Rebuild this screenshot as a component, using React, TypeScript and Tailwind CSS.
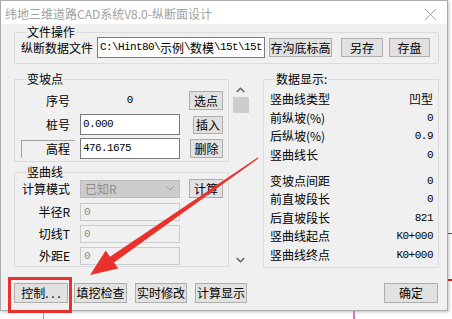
import React from "react";

function Btn(props: { children: React.ReactNode; className?: string }) {
  return (
    <button
      className={
        "flex shrink-0 items-center justify-center border border-[#adadad] bg-[#e1e1e1] text-[12px] leading-none text-black font-['Noto_Sans_CJK_SC',sans-serif] " +
        (props.className ?? "")
      }
    >
      {props.children}
    </button>
  );
}

function Group(props: { title: string; className?: string; children: React.ReactNode }) {
  return (
    <fieldset className={"border border-[#dcdcdc] " + (props.className ?? "")}>
      <legend className="ml-[5px] px-[1px] text-[12px] leading-[10px] text-black">{props.title}</legend>
      {props.children}
    </fieldset>
  );
}

function Row(props: { label: string; value: string }) {
  return (
    <div className="flex h-[18.5px] items-center justify-between text-[12px]">
      <span>{props.label}</span>
      <span className="font-['Liberation_Mono',monospace] text-[11px] tracking-[-0.5px]">{props.value}</span>
    </div>
  );
}

export default function App() {
  return (
    <div className="relative h-[319px] w-[452px] overflow-hidden bg-white font-['Noto_Sans_CJK_SC',sans-serif]">
      {/* background bits of the CAD drawing behind */}
      <div className="absolute left-[448px] top-[233px] h-[1px] w-[4px] bg-[#3050d0]" />
      <div className="absolute left-[448px] top-[279px] h-[2px] w-[4px] bg-[#d02020]" />
      <div className="absolute left-[43px] top-[311px] h-[8px] w-[1px] bg-[#e070c0]" />
      <div className="absolute left-[353px] top-[311px] h-[8px] w-[2px] bg-[#e070e0]" />

      {/* dialog */}
      <div className="flex h-[311px] w-[448px] flex-col border border-[#aaaaaa] bg-[#f0f0f0] shadow-[1px_1px_3px_rgba(0,0,0,0.25)]">
        <div className="flex h-[23px] shrink-0 items-center justify-between bg-white pl-[4px] pr-[6px] pt-[3px]">
          <span className="text-[12px] leading-none text-[#a0a0a0]">纬地三维道路CAD系统V8.0-纵断面设计</span>
          <svg width="13" height="13" viewBox="0 0 13 13" className="mr-[4px]">
            <path d="M1 1 L12 12 M12 1 L1 12" stroke="#a0a0a0" strokeWidth="1" />
          </svg>
        </div>

        <div className="flex flex-1 flex-col pl-[13px] pt-[3px] text-[12px] text-black">
          <Group title="文件操作" className="w-[425px] pb-[5px] pl-[6px]">
            <div className="flex h-[21px] items-center">
              <span className="w-[72px] shrink-0 leading-none">纵断数据文件</span>
              <div className="ml-[4px] flex h-[21px] w-[168px] shrink-0 items-center overflow-hidden whitespace-nowrap border border-[#7a7a7a] bg-white pl-[2px] font-['Liberation_Mono',monospace] text-[11px] tracking-[-0.6px]">
                C:\Hint80\<span className="text-[12px] tracking-normal font-['Noto_Sans_CJK_SC',sans-serif]">示例</span>\<span className="text-[12px] tracking-normal font-['Noto_Sans_CJK_SC',sans-serif]">数模</span>\15t\15t
              </div>
              <Btn className="ml-[4px] h-[19px] w-[63px]">存沟底标高</Btn>
              <Btn className="ml-[9px] h-[19px] w-[42px]">另存</Btn>
              <Btn className="ml-[6px] h-[19px] w-[41px]">存盘</Btn>
            </div>
          </Group>

          <div className="mt-[10px] flex items-stretch">
            <div className="flex w-[215px] shrink-0 flex-col">
              <Group title="变坡点" className="pb-[2px] pl-[6px] pr-[5px] pt-[6px]">
                <div className="flex flex-col gap-[3px]">
                  <div className="flex h-[21px] items-center">
                    <span className="w-[54px] pr-[5px] text-right">序号</span>
                    <span className="ml-[5px] w-[100px] text-center font-['Liberation_Mono',monospace] text-[11px]">0</span>
                    <Btn className="ml-auto h-[19px] w-[34px]">选点</Btn>
                  </div>
                  <div className="flex h-[21px] items-center">
                    <span className="w-[54px] pr-[5px] text-right">桩号</span>
                    <div className="ml-[5px] flex h-[21px] w-[100px] items-center border border-[#7a7a7a] bg-white pl-[2px] font-['Liberation_Mono',monospace] text-[11px] tracking-[-0.6px]">0.000</div>
                    <Btn className="ml-auto h-[18px] w-[30px]">插入</Btn>
                  </div>
                  <div className="flex h-[21px] items-center">
                    <span className="flex h-[18px] w-[54px] items-center justify-end border-l border-t border-[#a0a0a0] border-b-white border-r-white pr-[5px]">高程</span>
                    <div className="ml-[5px] flex h-[21px] w-[100px] items-center border border-[#7a7a7a] bg-white pl-[2px] font-['Liberation_Mono',monospace] text-[11px] tracking-[-0.6px]">476.1675</div>
                    <Btn className="ml-auto h-[19px] w-[33px]">删除</Btn>
                  </div>
                </div>
              </Group>

              <Group title="竖曲线" className="mt-[5px] pb-[1px] pl-[6px] pr-[5px] pt-[2px]">
                <div className="flex h-[19px] items-center">
                  <span className="w-[54px] pr-[5px] text-right">计算模式</span>
                  <div className="ml-[5px] flex h-[18px] w-[100px] items-center justify-between border border-[#bcbcbc] bg-[#cccccc] pl-[4px] pr-[5px] text-[#8c8c8c]">
                    <span>已知R</span>
                    <svg width="8" height="5" viewBox="0 0 8 5">
                      <path d="M0.5 0.5 L4 4 L7.5 0.5" fill="none" stroke="#9a9a9a" strokeWidth="1" />
                    </svg>
                  </div>
                  <Btn className="ml-auto h-[19px] w-[34px]">计算</Btn>
                </div>
                {[
                  ["半径R", "mt-[5px]"],
                  ["切线T", "mt-[4px]"],
                  ["外距E", "mt-[4px]"],
                ].map(([l, m]) => (
                  <div key={l} className={"flex h-[18px] items-center " + m}>
                    <span className="w-[54px] pr-[5px] text-right">{l}</span>
                    <div className="ml-[5px] flex h-[18px] w-[100px] items-center border border-[#cccccc] bg-[#f0f0f0] pl-[3px] font-['Liberation_Mono',monospace] text-[11px] text-[#8c8c8c]">0</div>
                  </div>
                ))}
              </Group>
            </div>

            {/* scrollbar */}
            <div className="ml-[3px] mt-[8px] flex h-[186px] w-[17px] shrink-0 flex-col items-center">
              <svg width="9" height="6" viewBox="0 0 9 6" className="mt-[5px]">
                <path d="M0.8 5 L4.5 1.3 L8.2 5" fill="none" stroke="#606060" strokeWidth="1.6" />
              </svg>
              <div className="mt-[4px] h-[16px] w-[16px] bg-[#cdcdcd]" />
              <svg width="9" height="6" viewBox="0 0 9 6" className="mb-[5px] mt-auto">
                <path d="M0.8 1 L4.5 4.7 L8.2 1" fill="none" stroke="#606060" strokeWidth="1.6" />
              </svg>
            </div>

            <Group title="数据显示:" className="ml-[14px] w-[176px] shrink-0 pl-[6px] pr-[5px] pt-[6px]">
              <Row label="竖曲线类型" value="" />
              <div className="-mt-[18.5px] flex h-[18.5px] items-center justify-end text-[12px]">凹型</div>
              <Row label="前纵坡(%)" value="0" />
              <Row label="后纵坡(%)" value="0.9" />
              <Row label="竖曲线长" value="0" />
              <div className="h-[7.5px]" />
              <Row label="变坡点间距" value="0" />
              <Row label="前直坡段长" value="0" />
              <Row label="后直坡段长" value="821" />
              <Row label="竖曲线起点" value="K0+000" />
              <Row label="竖曲线终点" value="K0+000" />
            </Group>
          </div>

          <div className="mt-[15px] flex w-[425px] items-center">
            <Btn className="h-[20px] w-[54px]">控制. . .</Btn>
            <Btn className="ml-[6px] h-[20px] w-[53px]">填挖检查</Btn>
            <Btn className="ml-[8px] h-[20px] w-[52px]">实时修改</Btn>
            <Btn className="ml-[8px] h-[20px] w-[52px]">计算显示</Btn>
            <Btn className="ml-auto mr-[1px] h-[20px] w-[54px]">确定</Btn>
          </div>
        </div>
      </div>

      {/* annotation overlays */}
      <div className="absolute left-[8px] top-[277px] h-[36px] w-[64px] border-[3px] border-[#e8302c]" />
      <svg className="absolute left-0 top-0" width="452" height="319" viewBox="0 0 452 319">
        <polygon
          points="258.3,158.4 114,262.5 118.3,268.6 90,275 105.7,250.6 110,256.7 257.7,157.6"
          fill="#e8302c"
        />
      </svg>
    </div>
  );
}
